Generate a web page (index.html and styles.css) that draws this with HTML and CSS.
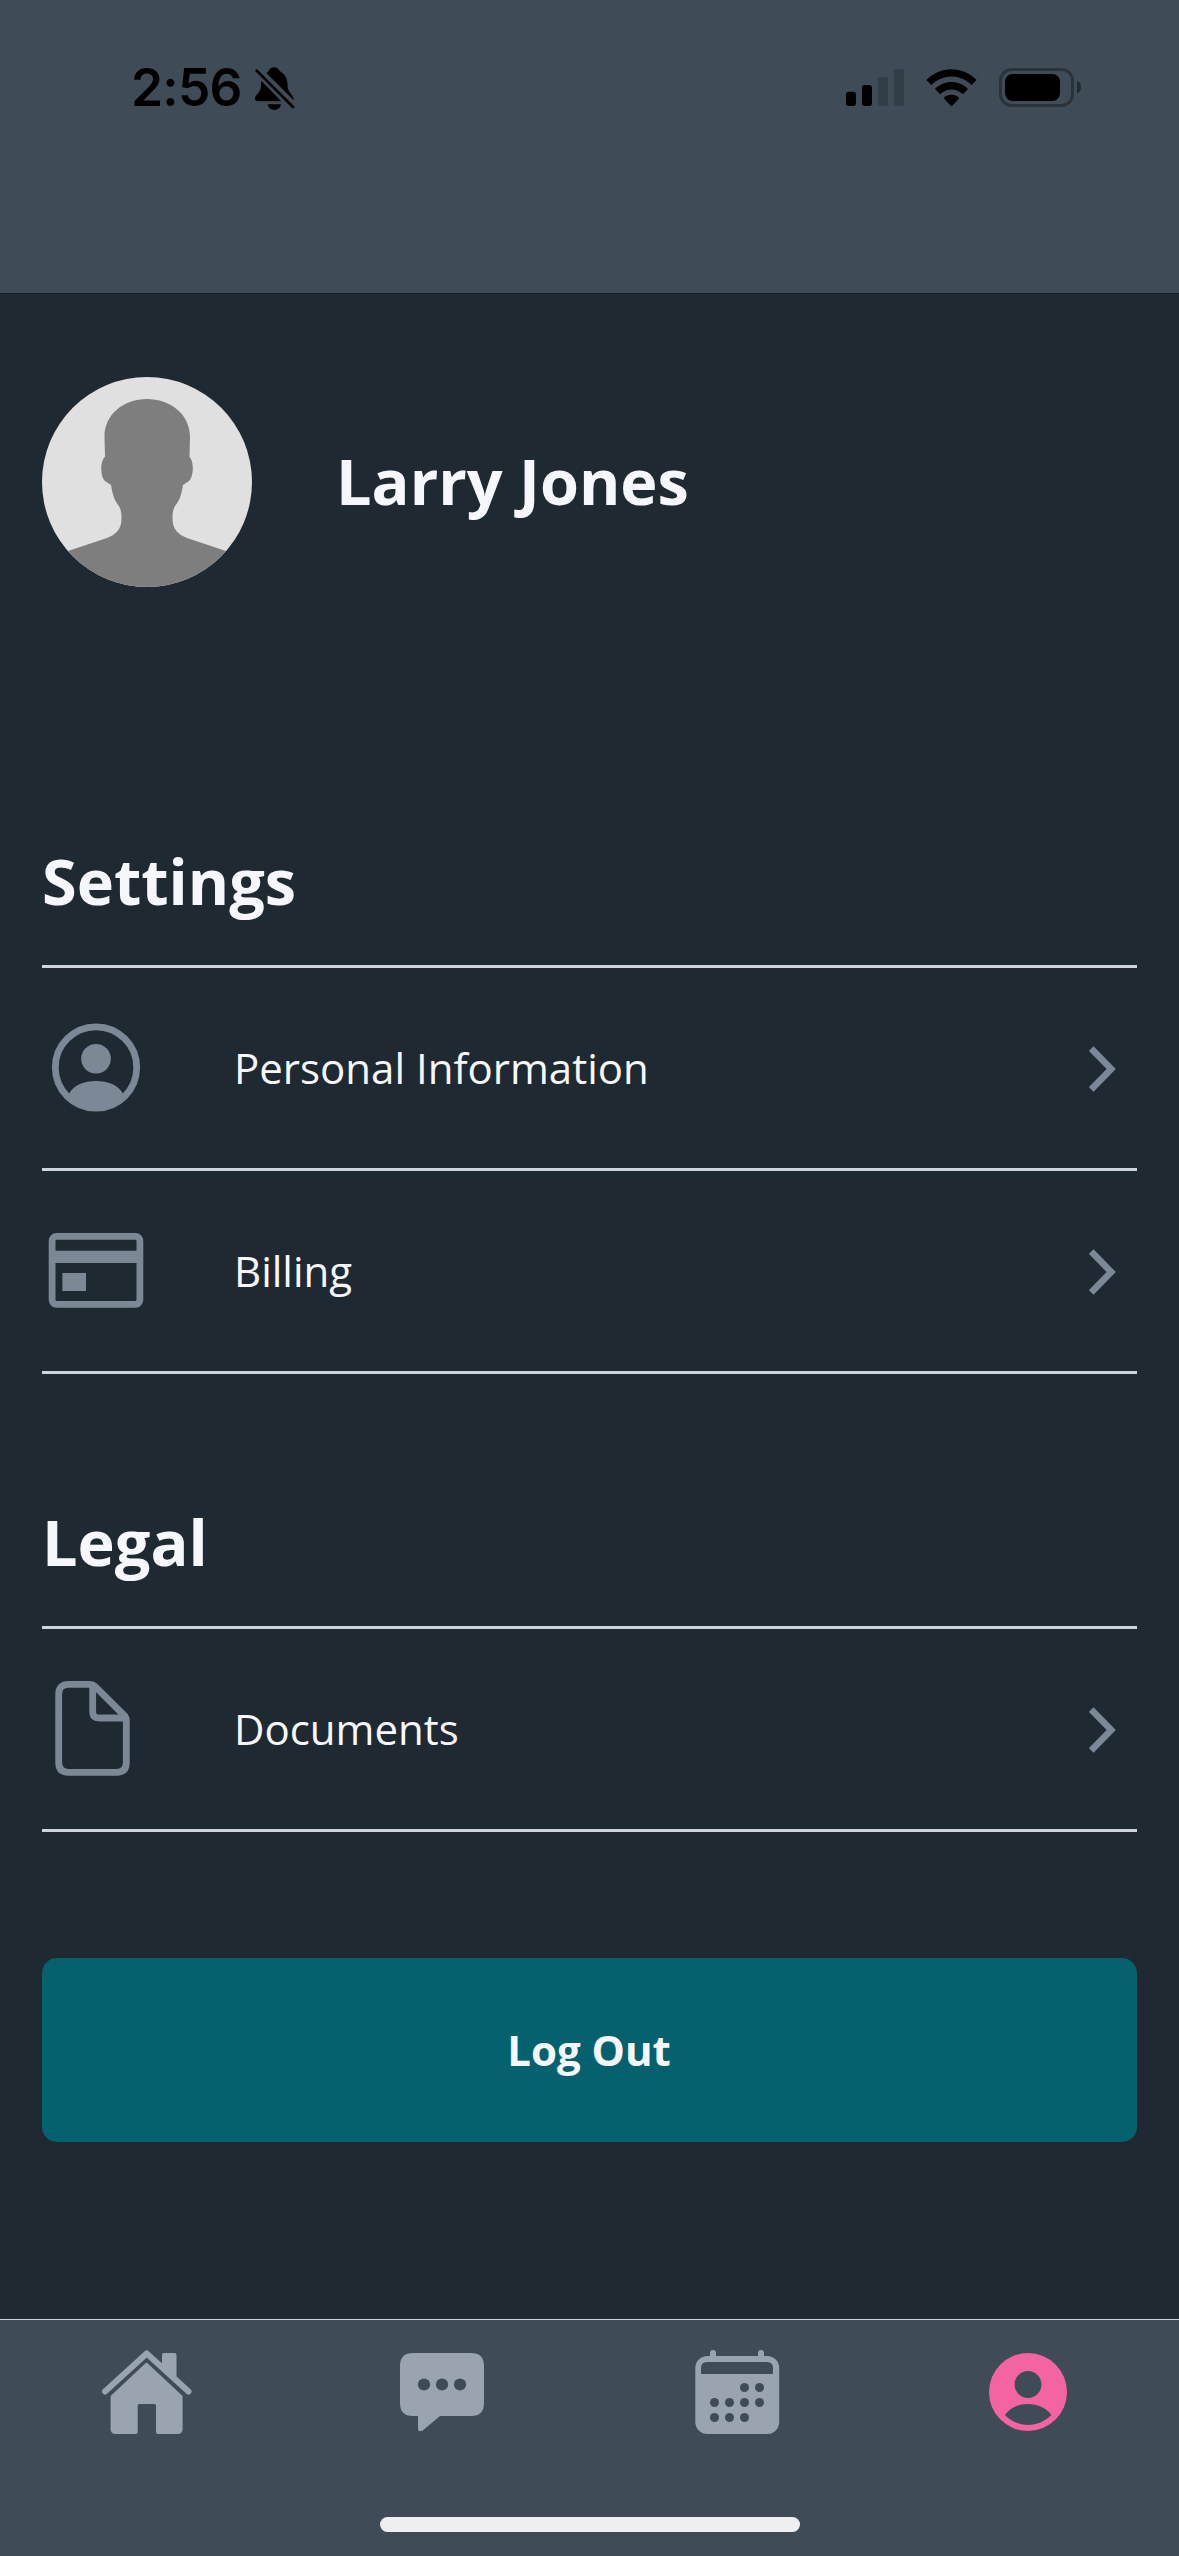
FILE: index.html
```html
<!DOCTYPE html>
<html lang="en">
<head>
<meta charset="utf-8">
<title>Profile</title>
<link rel="stylesheet" href="styles.css">
</head>
<body>
<div class="screen">
  <header class="header">
    <div class="clock">
      <span class="time">2:56</span>
      <svg class="bell" viewBox="464 80 120 130">
        <path d="M502 96C508 91 507 81 521 81S535 91 543 96C558 106 562 122 562 138C563 151 568 156 574 163C579 169 580 173 580 180L498 98Z"/>
        <path d="M483 121L543 183H474C462 183 461 172 468 165C478 154 482 148 482 132Z"/>
        <path d="M502 192H542C540 203 532 209 522 209S504 203 502 192Z"/>
        <path class="bell-slash" d="M469 91L578 200"/>
      </svg>
    </div>
    <div class="indicators">
      <svg class="signal" viewBox="78 87 174 111">
        <rect x="78" y="155" width="30" height="43" rx="8"/>
        <rect x="126" y="135" width="30" height="63" rx="8"/>
        <rect class="off" x="174" y="111" width="30" height="87" rx="8"/>
        <rect class="off" x="222" y="87" width="30" height="111" rx="8"/>
      </svg>
      <svg class="wifi" viewBox="318 86 153 113">
        <path d="M319 119C362 76 427 76 470 119L455 134C420 100 369 100 334 134Z"/>
        <path d="M345 146C373 118 416 118 444 146L429 162C409 143 380 143 360 162Z"/>
        <path d="M371 173C384 160 405 160 418 173L396 197Q394.500 199 393 197Z"/>
      </svg>
      <svg class="battery" viewBox="537 84 246 117">
        <rect class="shell" x="541.500" y="88.500" width="216" height="108" rx="33"/>
        <rect x="555" y="102" width="165" height="81" rx="23"/>
        <path class="nub" d="M771 123C787 129 787 154 771 160Z"/>
      </svg>
    </div>
  </header>

  <main class="content">
    <section class="profile">
      <svg class="avatar" viewBox="0 0 210 210">
        <defs><clipPath id="round"><circle cx="105" cy="105" r="105"/></clipPath></defs>
        <g clip-path="url(#round)">
          <rect class="avatar-bg" width="210" height="210"/>
          <path class="avatar-person" d="M105 22C128 22 148 37 148 60L147.500 80C152 84 152 99 147 104L141 108C139 120 137 124 133 129C131 133 130.500 136 130.500 141C130.500 153 136 157 145 161L184 174L210 184V210H0V184L26 174L65 161C74 157 79.500 153 79.500 141C79.500 136 79 133 77 129C73 124 71 120 69 108L63 104C58 99 58 84 63 80L62.500 60C62.500 37 82 22 105 22Z"/>
        </g>
      </svg>
      <h1 class="title">Larry Jones</h1>
    </section>

    <section class="group settings">
      <h2 class="title">Settings</h2>
      <ul class="list">
        <li class="row">
          <svg class="icon" viewBox="0 0 108 108">
            <circle class="line" cx="54" cy="53.500" r="40.700"/>
            <circle cx="54" cy="44.700" r="14.800"/>
            <path d="M27 79.500C32 71 42 67 54 67S76 71 81 79.500C75 89 65 94 54 94S33 89 27 79.500Z"/>
          </svg>
          <span class="label">Personal Information</span>
          <svg class="chevron" viewBox="0 0 28 46"><path d="M2.200 2.600L22.200 23L2.200 43.400"/></svg>
        </li>
        <li class="row">
          <svg class="icon" viewBox="0 0 108 108">
            <rect class="line" x="10.100" y="19.400" width="87.800" height="67.900" rx="4.500"/>
            <rect x="8" y="33.700" width="92" height="12.300"/>
            <rect x="20.400" y="56" width="23.600" height="18"/>
          </svg>
          <span class="label">Billing</span>
          <svg class="chevron" viewBox="0 0 28 46"><path d="M2.200 2.600L22.200 23L2.200 43.400"/></svg>
        </li>
      </ul>
    </section>

    <section class="group">
      <h2 class="title">Legal</h2>
      <ul class="list">
        <li class="row">
          <svg class="icon" viewBox="0 0 108 108">
            <path class="line" d="M26.500 9.400H48Q51 9.400 53 11.400L82.300 40.500Q84.300 42.500 84.300 46V87.500Q84.300 97.300 74.500 97.300H26.500Q16.700 97.300 16.700 87.500V19.200Q16.700 9.400 26.500 9.400Z"/>
            <path class="line" d="M50.700 11V37Q50.700 43 57 43H83"/>
          </svg>
          <span class="label">Documents</span>
          <svg class="chevron" viewBox="0 0 28 46"><path d="M2.200 2.600L22.200 23L2.200 43.400"/></svg>
        </li>
      </ul>
    </section>

    <button class="logout" type="button">Log Out</button>
  </main>

  <nav class="tabs">
    <div class="tab-list">
      <svg class="tab" viewBox="0 0 90 90">
        <path class="roof" d="M3 44.500L44.700 6.500L86.500 44.500"/>
        <path d="M60 7.500Q60 6 62 6H72.500Q74.500 6 74.500 8V33L60 19Z"/>
        <path d="M44.700 15.500L80.600 49V82Q80.600 87 75.500 87H56Q54 87 54 85V58.500Q54 57 52.500 57H37.200Q35.700 57 35.700 58.500V85Q35.700 87 33.700 87H13.600Q8.600 87 8.600 82V49L43.200 16.500Q44.700 15 46.200 16.500Z"/>
      </svg>
      <svg class="tab" viewBox="0 0 90 90">
        <path d="M16 6H74Q87 6 87 19V56Q87 69 74 69H43L26 83.200Q21 86 21 81V69H16Q3 69 3 56V19Q3 6 16 6Z"/>
        <circle class="hole" cx="27" cy="37.500" r="6.100"/><circle class="hole" cx="45" cy="37.500" r="6.100"/><circle class="hole" cx="63" cy="37.500" r="6.100"/>
      </svg>
      <svg class="tab" viewBox="0 0 90 90">
        <rect x="3.300" y="9" width="83.900" height="78" rx="12"/>
        <rect x="18" y="3" width="6" height="12" rx="3"/><rect x="66" y="3" width="6" height="12" rx="3"/>
        <path class="hole" d="M15 15H75Q81 15 81 21V26Q81 27 80 27H10Q9 27 9 26V21Q9 15 15 15Z"/>
        <g class="hole">
          <circle cx="52.500" cy="40.500" r="4.500"/><circle cx="67.500" cy="40.500" r="4.500"/>
          <circle cx="22.500" cy="55.500" r="4.500"/><circle cx="37.500" cy="55.500" r="4.500"/><circle cx="52.500" cy="55.500" r="4.500"/><circle cx="67.500" cy="55.500" r="4.500"/>
          <circle cx="22.500" cy="70.500" r="4.500"/><circle cx="37.500" cy="70.500" r="4.500"/><circle cx="52.500" cy="70.500" r="4.500"/>
        </g>
      </svg>
      <svg class="tab active" viewBox="0 0 90 90">
        <circle cx="41" cy="45" r="39"/>
        <circle class="hole" cx="41" cy="37.500" r="13.400"/>
        <path class="hole" d="M17.800 68C23.600 60.500 31.600 57 41 57S58.600 60.500 64.400 68C57.600 74.500 49.600 78 41 78S24.600 74.500 17.800 68Z"/>
      </svg>
    </div>
    <div class="home-indicator"></div>
  </nav>
</div>
</body>
</html>
```
FILE: styles.css
```css
* { box-sizing: border-box; }

body {
  margin: 0;
  background: #1f2932;
  color: #f6f7fc;
  font-family: "Open Sans", sans-serif;
}

svg { display: block; flex: none; }

.screen {
  display: flex;
  flex-direction: column;
  width: 1179px;
  height: 2556px;
}

.header {
  display: flex;
  justify-content: space-between;
  align-items: flex-start;
  height: 293px;
  padding: 66px 98px 0 131px;
  background: #3f4c58;
}

.clock { display: flex; }

.time {
  width: 123.700px;
  height: 43px;
  color: #000;
  font: 600 51.500px/43px Inter, sans-serif;
  letter-spacing: -0.8px;
  white-space: nowrap;
}

.bell { width: 40px; height: 43.300px; margin-top: 1px; }
.bell-slash { stroke: #000; stroke-width: 8; stroke-linecap: round; }

.indicators { display: flex; padding-top: 2px; }
.signal { width: 58px; height: 37px; margin: 1px 22px 0 0; }
.signal .off { fill: #313e48; }
.wifi { width: 51px; height: 37.700px; margin: 0.700px 22px 0 0; }
.battery { width: 82px; height: 39px; }
.battery .shell { fill: none; stroke: #2a333b; stroke-width: 9; }
.battery .nub { fill: #22292f; }

.content {
  display: flex;
  flex: 1;
  flex-direction: column;
  padding: 83px 42px 0;
  border-top: 1px solid #18212b;
}

.profile { display: flex; align-items: center; gap: 84px; }
.profile .title { padding-bottom: 3px; }
.avatar { width: 210px; height: 210px; }
.avatar-bg { fill: #e0e0e0; }
.avatar-person { fill: #7e7e7e; }

.title {
  margin: 0;
  font-size: 63px;
  font-weight: 700;
  line-height: 86px;
}

.settings { margin-top: 251px; }
.group { margin-bottom: 126px; }
.group + .group { margin-top: -1px; }

.list {
  margin: 41px 0 0;
  padding: 0;
  border-top: 3px solid #cdd4dc;
  list-style: none;
}

.row {
  display: flex;
  align-items: center;
  height: 203px;
  padding-right: 20px;
  border-bottom: 3px solid #cdd4dc;
}

.icon { width: 108px; height: 108px; fill: #7c8896; }
.icon .line { fill: none; stroke: #7c8896; stroke-width: 6.800; }
.label { flex: 1; margin-left: 84px; padding-bottom: 2px; font-size: 42px; line-height: 57px; }
.chevron { width: 28px; height: 46px; margin-top: 2px; fill: none; stroke: #7c8896; stroke-width: 6.600; }

.logout {
  height: 184px;
  padding: 0 1px 2px 0;
  border: 0;
  border-radius: 15px;
  background: #04616d;
  color: #f6f7fc;
  font: 700 42px/57px "Open Sans", sans-serif;
}

.tabs {
  display: flex;
  flex-direction: column;
  align-items: center;
  height: 237px;
  border-top: 1px solid #cdd4dc;
  background: #3f4c58;
}

.tab-list {
  display: grid;
  grid-template-columns: repeat(4, 1fr);
  justify-items: center;
  width: 100%;
  padding-top: 27px;
}

.tab { width: 90px; height: 90px; fill: #9aa4b1; }
.tab.active { fill: #f464a2; }
.tab .hole { fill: #3f4c58; }
.tab .roof { fill: none; stroke: #9aa4b1; stroke-width: 6; stroke-linecap: round; stroke-linejoin: round; }

.home-indicator {
  width: 420px;
  height: 15px;
  margin-top: 80px;
  border-radius: 8px;
  background: #efefef;
}
```
